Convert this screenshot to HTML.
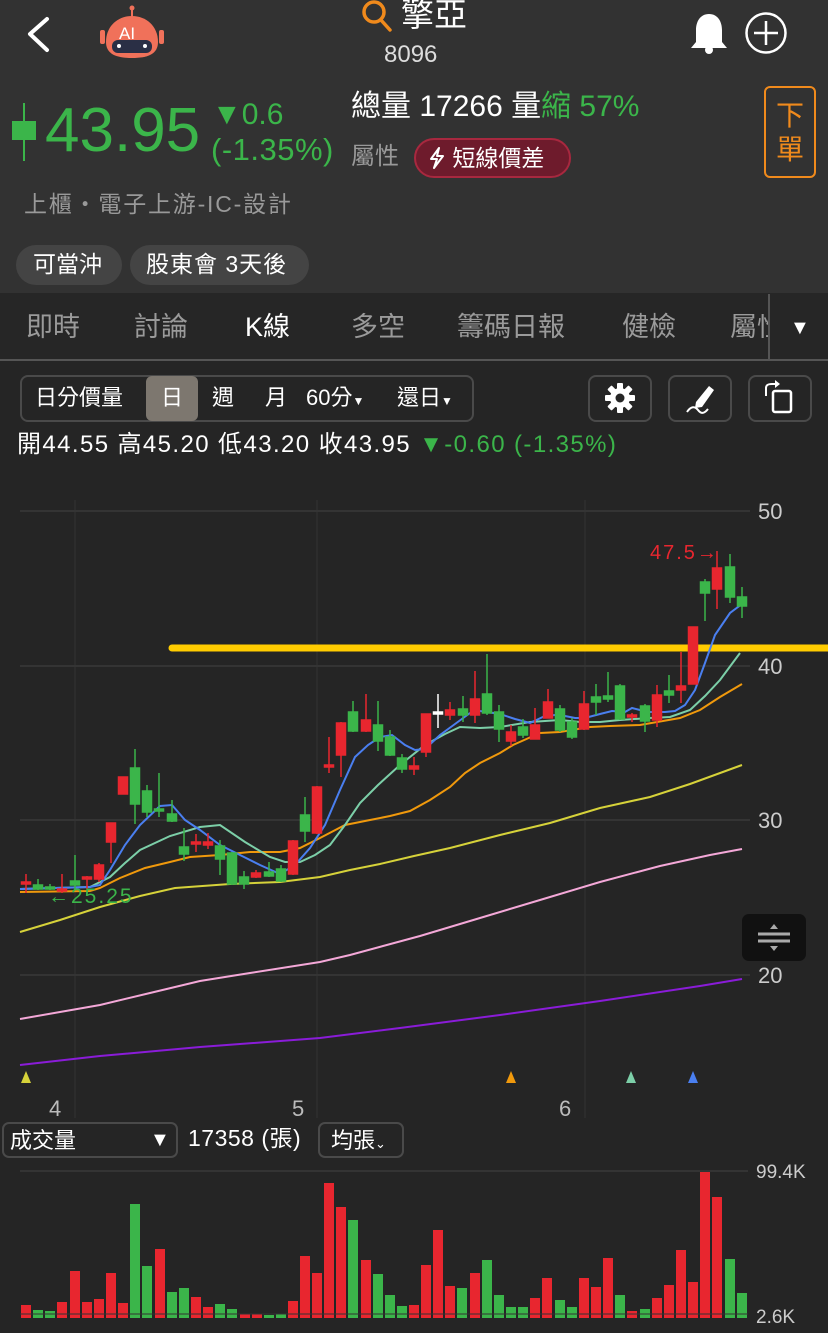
<!DOCTYPE html>
<html><head><meta charset="utf-8">
<style>
*{margin:0;padding:0;box-sizing:border-box}
body{width:828px;height:1333px;background:#252525;position:relative;overflow:hidden;font-family:"Liberation Sans","Noto Sans CJK TC",sans-serif;color:#fff}
.a{position:absolute;white-space:nowrap;line-height:1}
.g{color:#3bb54a}
</style></head><body>
<div class="a" style="left:0;top:0;width:828px;height:293px;background:#323232"></div>
<div class="a" style="left:0;top:293px;width:828px;height:67px;background:#262626"></div>
<div class="a" style="left:0;top:359px;width:828px;height:2px;background:#555"></div>
<div class="a" style="left:768px;top:294px;width:2px;height:65px;background:#555"></div>

<!-- header icons -->
<svg class="a" style="left:0;top:0" width="828" height="70">
 <path d="M47 19 L30 34 L47 50" stroke="#fff" stroke-width="4" fill="none" stroke-linecap="round" stroke-linejoin="round"/>
 <line x1="132" y1="8" x2="132" y2="18" stroke="#f0715a" stroke-width="2"/>
 <circle cx="132" cy="8" r="2.5" fill="#f0715a"/>
 <rect x="100" y="30" width="5" height="14" rx="2" fill="#f0715a"/>
 <rect x="159" y="30" width="5" height="14" rx="2" fill="#f0715a"/>
 <path d="M132 16 C118 16 106 26 106 42 C106 54 116 58 132 58 C148 58 158 54 158 42 C158 26 146 16 132 16Z" fill="#f0715a"/>
 <rect x="112" y="40" width="40" height="13" rx="6" fill="#2a2f45"/>
 <circle cx="119" cy="46" r="2" fill="#fff"/><circle cx="145" cy="46" r="2" fill="#fff"/>
 <text x="119" y="39" font-size="17" fill="#fff" font-family="Liberation Sans">AI</text>
 <circle cx="374" cy="12" r="10" stroke="#f08a1c" stroke-width="3.5" fill="none"/>
 <line x1="381" y1="20" x2="390" y2="30" stroke="#f08a1c" stroke-width="3.5" stroke-linecap="round"/>
 <path d="M709 14 C700 14 696 22 696 30 L696 42 L691 48 L727 48 L722 42 L722 30 C722 22 718 14 709 14Z" fill="#fff"/>
 <circle cx="709" cy="50" r="4" fill="#fff"/>
 <circle cx="766" cy="33" r="19.5" stroke="#fff" stroke-width="2.5" fill="none"/>
 <path d="M754 33 H778 M766 21 V45" stroke="#fff" stroke-width="2.5"/>
</svg>
<div class="a" style="left:401px;top:-2px;font-size:33px">擎亞</div>
<div class="a" style="left:384px;top:43px;font-size:24px;color:#ddd">8096</div>

<!-- price -->
<div class="a" style="left:23px;top:103px;width:2px;height:58px;background:#3bb54a"></div>
<div class="a" style="left:12px;top:121px;width:24px;height:19px;background:#3bb54a"></div>
<div class="a g" style="left:45px;top:100px;font-size:62px">43.95</div>
<div class="a g" style="left:212px;top:100px;font-size:30px">▼0.6</div>
<div class="a g" style="left:211px;top:134px;font-size:31px;letter-spacing:0.5px">(-1.35%)</div>
<div class="a" style="left:351px;top:92px;font-size:30px">總量 17266 量<span class="g">縮 57%</span></div>
<div class="a" style="left:351px;top:145px;font-size:24px;color:#999">屬性</div>
<div class="a" style="left:414px;top:138px;width:157px;height:40px;border-radius:20px;background:#6e1b2c;border:2px solid #a8283f;font-size:23px;padding:7px 0 0 12px">
<svg width="18" height="22" style="vertical-align:-3px" viewBox="0 0 18 22"><path d="M11 1 L3 12 H9 L6 21 L15 9 H9 Z" stroke="#fff" stroke-width="2" fill="none" stroke-linejoin="round"/></svg> 短線價差</div>
<div class="a" style="left:764px;top:86px;width:52px;height:92px;border:2px solid #f08a1c;border-radius:6px;color:#f08a1c;font-size:28px;line-height:34px;text-align:center;padding-top:11px">下<br>單</div>
<div class="a" style="left:24px;top:193px;font-size:23px;color:#999;letter-spacing:1.8px">上櫃・電子上游-IC-設計</div>
<div class="a" style="left:16px;top:245px;width:106px;height:40px;border-radius:20px;background:#444;font-size:23px;padding:8px 0 0 17px">可當沖</div>
<div class="a" style="left:130px;top:245px;width:179px;height:40px;border-radius:20px;background:#444;font-size:23px;padding:8px 0 0 16px;letter-spacing:1px">股東會 3天後</div>

<!-- tabs -->
<div class="a" style="top:314px;left:26px;font-size:27px;color:#9a9a9a">即時</div>
<div class="a" style="top:314px;left:134px;font-size:27px;color:#9a9a9a">討論</div>
<div class="a" style="top:314px;left:245px;font-size:27px;color:#fff">K線</div>
<div class="a" style="top:314px;left:351px;font-size:27px;color:#9a9a9a">多空</div>
<div class="a" style="top:314px;left:457px;font-size:27px;color:#9a9a9a">籌碼日報</div>
<div class="a" style="top:314px;left:622px;font-size:27px;color:#9a9a9a">健檢</div>
<div class="a" style="top:314px;left:730px;width:38px;overflow:hidden;font-size:27px;color:#9a9a9a">屬性</div>
<div class="a" style="top:318px;left:790px;font-size:20px;color:#fff">▼</div>

<!-- toolbar -->
<div class="a" style="left:20px;top:375px;width:454px;height:47px;border:2px solid #4a4a4a;border-radius:8px"></div>
<div class="a" style="left:146px;top:376px;width:52px;height:45px;background:#7d776f;border-radius:6px"></div>
<div class="a" style="top:387px;left:35px;font-size:22px">日分價量</div>
<div class="a" style="top:387px;left:161px;font-size:22px">日</div>
<div class="a" style="top:387px;left:212px;font-size:22px">週</div>
<div class="a" style="top:387px;left:265px;font-size:22px">月</div>
<div class="a" style="top:387px;left:306px;font-size:22px">60分<span style="font-size:12px">▼</span></div>
<div class="a" style="top:387px;left:397px;font-size:22px">還日<span style="font-size:12px">▼</span></div>
<div class="a" style="left:588px;top:375px;width:64px;height:47px;border:2px solid #4a4a4a;border-radius:8px"></div>
<div class="a" style="left:668px;top:375px;width:64px;height:47px;border:2px solid #4a4a4a;border-radius:8px"></div>
<div class="a" style="left:748px;top:375px;width:64px;height:47px;border:2px solid #4a4a4a;border-radius:8px"></div>
<svg class="a" style="left:580px;top:370px" width="240" height="56">
 <g transform="translate(40,28)" fill="#fff">
  <circle r="10"/>
  <g><rect x="-3" y="-15" width="6" height="30" rx="1"/><rect x="-3" y="-15" width="6" height="30" rx="1" transform="rotate(45)"/><rect x="-3" y="-15" width="6" height="30" rx="1" transform="rotate(90)"/><rect x="-3" y="-15" width="6" height="30" rx="1" transform="rotate(135)"/></g>
  <circle r="4.5" fill="#252525"/>
 </g>
 <path d="M129 16 L134 20 L122 37 L115 38 L116 32 Z" fill="#fff"/>
 <path d="M107 42 C111 36 115 36 118 40 C121 44 124 44 128 39" stroke="#fff" stroke-width="2" fill="none"/>
 <rect x="193" y="21" width="18" height="21" rx="2" stroke="#fff" stroke-width="2.5" fill="none"/>
 <path d="M186 26 V18 C186 15 188 14 192 14 H197" stroke="#fff" stroke-width="2" fill="none"/>
 <path d="M195 10 L200 14 L195 18 Z" fill="#fff"/>
</svg>
<div class="a" style="top:433px;left:17px;font-size:24px;letter-spacing:1.4px">開44.55 高45.20 低43.20 收43.95 <span class="g">▼-0.60 (-1.35%)</span></div>

<!-- chart -->
<svg class="a" style="left:0;top:0" width="828" height="1333">
 <g stroke="#3a3a3a" stroke-width="1.5">
  <line x1="20" y1="511" x2="750" y2="511"/><line x1="20" y1="666" x2="750" y2="666"/>
  <line x1="20" y1="820" x2="750" y2="820"/><line x1="20" y1="975" x2="750" y2="975"/>
 </g>
 <g stroke="#333" stroke-width="1">
  <line x1="75" y1="500" x2="75" y2="1118"/><line x1="317" y1="500" x2="317" y2="1118"/><line x1="585" y1="500" x2="585" y2="1118"/>
 </g>
 <g font-size="22" fill="#ccc" font-family="Liberation Sans">
  <text x="758" y="519">50</text><text x="758" y="674">40</text><text x="758" y="828">30</text><text x="758" y="983">20</text>
 </g>
 <line x1="172" y1="648" x2="828" y2="648" stroke="#ffcc00" stroke-width="7" stroke-linecap="round"/>
 <g fill="none" stroke-width="2">
  <polyline stroke="#8a1cd8" points="20,1065 100,1056 200,1047 320,1038 400,1028 500,1015 600,1001 700,986 742,979"/>
  <polyline stroke="#f4a8d8" points="20,1019 100,1005 150,993 200,981 250,973 320,962 350,955 420,936 480,918 540,900 600,882 660,866 710,855 742,849"/>
  <polyline stroke="#d6d23a" points="20,932 60,920 100,907 140,896 175,888 230,884 280,882 320,877 350,870 380,864 414,856 450,848 500,835 550,823 600,808 650,797 690,784 742,765"/>
  <polyline stroke="#f0990c" points="20,892 90,891 100,888 120,878 145,868 170,862 190,857 220,855 250,852 280,852 300,848 320,838 345,825 370,820 390,816 410,811 430,800 450,787 465,773 480,763 500,753 513,745 540,733 560,732 590,727 610,726 640,725 680,718 700,710 720,697 742,684"/>
  <polyline stroke="#7ccfa8" points="20,889 90,887 110,877 125,863 140,850 170,836 200,827 220,825 245,842 270,857 285,862 300,862 315,855 330,845 345,825 360,803 378,785 400,765 425,745 445,734 460,727 480,728 500,727 530,722 560,720 580,722 600,722 620,720 650,718 670,717 690,710 705,696 720,680 740,653"/>
  <polyline stroke="#4a7ff0" points="20,889 90,887 100,885 110,870 125,845 140,825 160,806 172,805 185,820 200,830 220,845 240,855 260,865 280,874 295,865 310,848 325,825 340,790 355,757 368,745 380,737 392,735 405,745 415,750 425,749 440,735 455,724 470,713 480,711 500,714 515,719 530,723 545,716 555,715 565,716 575,718 585,718 600,714 612,711 625,712 632,708 640,710 650,712 665,712 675,711 685,705 695,690 705,663 715,635 730,613 742,604"/>
 </g>
 <g stroke-width="1.5">
<g stroke="#e8262f" fill="#e8262f">
 <line x1="26" y1="874" x2="26" y2="893"/><rect x="21.5" y="882" width="9" height="2"/>
 <line x1="62" y1="874" x2="62" y2="893"/><rect x="57.5" y="889" width="9" height="2"/>
 <line x1="87" y1="876" x2="87" y2="889"/><rect x="82.5" y="877" width="9" height="2"/>
 <line x1="99" y1="863" x2="99" y2="882"/><rect x="94.5" y="865" width="9" height="14"/>
 <line x1="111" y1="823" x2="111" y2="863"/><rect x="106.5" y="823" width="9" height="19"/>
 <rect x="118.5" y="777" width="9" height="17"/>
 <line x1="196" y1="834" x2="196" y2="852"/><rect x="191.5" y="842" width="9" height="2"/>
 <line x1="208" y1="833" x2="208" y2="849"/><rect x="203.5" y="842" width="9" height="3"/>
 <line x1="256" y1="870" x2="256" y2="878"/><rect x="251.5" y="873" width="9" height="4"/>
 <line x1="293" y1="840" x2="293" y2="875"/><rect x="288.5" y="841" width="9" height="33"/>
 <line x1="317" y1="786" x2="317" y2="834"/><rect x="312.5" y="787" width="9" height="46"/>
 <line x1="329" y1="737" x2="329" y2="773"/><rect x="324.5" y="765" width="9" height="2"/>
 <line x1="341" y1="722" x2="341" y2="777"/><rect x="336.5" y="723" width="9" height="32"/>
 <line x1="366" y1="694" x2="366" y2="732"/><rect x="361.5" y="720" width="9" height="11"/>
 <line x1="414" y1="757" x2="414" y2="775"/><rect x="409.5" y="766" width="9" height="3"/>
 <line x1="426" y1="714" x2="426" y2="757"/><rect x="421.5" y="714" width="9" height="38"/>
 <line x1="450" y1="702" x2="450" y2="720"/><rect x="445.5" y="710" width="9" height="5"/>
 <line x1="475" y1="671" x2="475" y2="723"/><rect x="470.5" y="699" width="9" height="16"/>
 <line x1="511" y1="725" x2="511" y2="746"/><rect x="506.5" y="732" width="9" height="9"/>
 <line x1="535" y1="708" x2="535" y2="739"/><rect x="530.5" y="725" width="9" height="14"/>
 <line x1="548" y1="689" x2="548" y2="718"/><rect x="543.5" y="702" width="9" height="16"/>
 <line x1="584" y1="691" x2="584" y2="730"/><rect x="579.5" y="704" width="9" height="25"/>
 <line x1="632" y1="713" x2="632" y2="722"/><rect x="627.5" y="715" width="9" height="2"/>
 <line x1="657" y1="685" x2="657" y2="727"/><rect x="652.5" y="695" width="9" height="25"/>
 <line x1="681" y1="652" x2="681" y2="703"/><rect x="676.5" y="686" width="9" height="4"/>
 <rect x="688.5" y="627" width="9" height="57"/>
 <line x1="717" y1="551" x2="717" y2="609"/><rect x="712.5" y="568" width="9" height="21"/>
</g>
<g stroke="#3bb54a" fill="#3bb54a">
 <line x1="38" y1="879" x2="38" y2="890"/><rect x="33.5" y="885" width="9" height="4"/>
 <line x1="50" y1="884" x2="50" y2="890"/><rect x="45.5" y="887" width="9" height="2"/>
 <line x1="75" y1="855" x2="75" y2="890"/><rect x="70.5" y="881" width="9" height="4"/>
 <line x1="135" y1="749" x2="135" y2="824"/><rect x="130.5" y="768" width="9" height="36"/>
 <line x1="147" y1="785" x2="147" y2="817"/><rect x="142.5" y="791" width="9" height="21"/>
 <line x1="159" y1="773" x2="159" y2="817"/><rect x="154.5" y="809" width="9" height="2"/>
 <line x1="172" y1="800" x2="172" y2="822"/><rect x="167.5" y="814" width="9" height="7"/>
 <line x1="184" y1="828" x2="184" y2="861"/><rect x="179.5" y="847" width="9" height="7"/>
 <line x1="220" y1="840" x2="220" y2="875"/><rect x="215.5" y="846" width="9" height="13"/>
 <line x1="232" y1="852" x2="232" y2="885"/><rect x="227.5" y="853" width="9" height="31"/>
 <line x1="244" y1="871" x2="244" y2="889"/><rect x="239.5" y="877" width="9" height="7"/>
 <line x1="269" y1="862" x2="269" y2="877"/><rect x="264.5" y="872" width="9" height="4"/>
 <line x1="281" y1="865" x2="281" y2="882"/><rect x="276.5" y="869" width="9" height="12"/>
 <line x1="305" y1="797" x2="305" y2="842"/><rect x="300.5" y="815" width="9" height="16"/>
 <line x1="353" y1="701" x2="353" y2="732"/><rect x="348.5" y="712" width="9" height="19"/>
 <line x1="378" y1="701" x2="378" y2="751"/><rect x="373.5" y="725" width="9" height="16"/>
 <line x1="390" y1="730" x2="390" y2="756"/><rect x="385.5" y="737" width="9" height="18"/>
 <line x1="402" y1="754" x2="402" y2="773"/><rect x="397.5" y="758" width="9" height="11"/>
 <line x1="463" y1="696" x2="463" y2="722"/><rect x="458.5" y="709" width="9" height="6"/>
 <line x1="487" y1="654" x2="487" y2="715"/><rect x="482.5" y="694" width="9" height="19"/>
 <line x1="499" y1="705" x2="499" y2="742"/><rect x="494.5" y="712" width="9" height="17"/>
 <line x1="523" y1="719" x2="523" y2="738"/><rect x="518.5" y="727" width="9" height="8"/>
 <line x1="560" y1="705" x2="560" y2="732"/><rect x="555.5" y="709" width="9" height="21"/>
 <line x1="572" y1="718" x2="572" y2="739"/><rect x="567.5" y="722" width="9" height="15"/>
 <line x1="596" y1="684" x2="596" y2="715"/><rect x="591.5" y="697" width="9" height="5"/>
 <line x1="608" y1="672" x2="608" y2="702"/><rect x="603.5" y="696" width="9" height="3"/>
 <line x1="620" y1="684" x2="620" y2="720"/><rect x="615.5" y="686" width="9" height="33"/>
 <line x1="645" y1="704" x2="645" y2="732"/><rect x="640.5" y="706" width="9" height="15"/>
 <line x1="669" y1="675" x2="669" y2="703"/><rect x="664.5" y="691" width="9" height="4"/>
 <line x1="705" y1="579" x2="705" y2="621"/><rect x="700.5" y="582" width="9" height="11"/>
 <line x1="730" y1="554" x2="730" y2="603"/><rect x="725.5" y="567" width="9" height="30"/>
 <line x1="742" y1="587" x2="742" y2="618"/><rect x="737.5" y="597" width="9" height="9"/>
</g>
<g stroke="#fff" fill="#fff"><line x1="438" y1="694" x2="438" y2="728"/><rect x="433.5" y="712" width="9" height="2"/></g>
 </g>
 <text x="650" y="559" font-size="20" fill="#e8262f" font-family="Liberation Sans" letter-spacing="2">47.5→</text>
 <text x="48" y="903" font-size="21" fill="#3bb54a" font-family="Liberation Sans" letter-spacing="2">←25.25</text>
 <rect x="742" y="914" width="64" height="47" rx="7" fill="#111"/>
 <path d="M758 934 H790 M758 941 H790" stroke="#aaa" stroke-width="3"/>
 <path d="M770 929 L774 924 L778 929 Z M770 946 L774 951 L778 946 Z" fill="#aaa"/>
 <path d="M21 1083 L26 1071 L31 1083 Z" fill="#d6d23a"/>
 <path d="M506 1083 L511 1071 L516 1083 Z" fill="#f0990c"/>
 <path d="M626 1083 L631 1071 L636 1083 Z" fill="#7ccfa8"/>
 <path d="M688 1083 L693 1071 L698 1083 Z" fill="#4a7ff0"/>
 <g font-size="22" fill="#bbb" font-family="Liberation Sans"><text x="49" y="1116">4</text><text x="292" y="1116">5</text><text x="559" y="1116">6</text></g>
 <line x1="20" y1="1171" x2="748" y2="1171" stroke="#3a3a3a" stroke-width="1.5"/>
 <g font-size="19" fill="#ccc" font-family="Liberation Sans"><text x="756" y="1178">99.4K</text><text x="756" y="1323">2.6K</text></g>
 <g fill="#e8262f">
  <rect x="21" y="1305" width="10" height="13"/><rect x="57" y="1302" width="10" height="16"/><rect x="70" y="1271" width="10" height="47"/><rect x="82" y="1302" width="10" height="16"/><rect x="94" y="1299" width="10" height="19"/><rect x="106" y="1273" width="10" height="45"/><rect x="118" y="1303" width="10" height="15"/>
  <rect x="155" y="1249" width="10" height="69"/><rect x="191" y="1297" width="10" height="21"/><rect x="203" y="1307" width="10" height="11"/><rect x="240" y="1314" width="10" height="4"/><rect x="252" y="1314" width="10" height="4"/>
  <rect x="288" y="1301" width="10" height="17"/><rect x="300" y="1256" width="10" height="62"/><rect x="312" y="1273" width="10" height="45"/><rect x="324" y="1183" width="10" height="135"/><rect x="336" y="1207" width="10" height="111"/>
  <rect x="361" y="1260" width="10" height="58"/><rect x="409" y="1305" width="10" height="13"/><rect x="421" y="1265" width="10" height="53"/><rect x="433" y="1230" width="10" height="88"/><rect x="445" y="1286" width="10" height="32"/><rect x="470" y="1273" width="10" height="45"/>
  <rect x="530" y="1298" width="10" height="20"/><rect x="542" y="1278" width="10" height="40"/><rect x="579" y="1278" width="10" height="40"/><rect x="591" y="1287" width="10" height="31"/><rect x="603" y="1258" width="10" height="60"/><rect x="627" y="1311" width="10" height="7"/>
  <rect x="652" y="1298" width="10" height="20"/><rect x="664" y="1285" width="10" height="33"/><rect x="676" y="1250" width="10" height="68"/><rect x="688" y="1282" width="10" height="36"/><rect x="700" y="1172" width="10" height="146"/><rect x="712" y="1197" width="10" height="121"/>
 </g>
 <g fill="#3bb54a">
  <rect x="33" y="1310" width="10" height="8"/><rect x="45" y="1311" width="10" height="7"/><rect x="130" y="1204" width="10" height="114"/><rect x="142" y="1266" width="10" height="52"/><rect x="167" y="1292" width="10" height="26"/><rect x="179" y="1288" width="10" height="30"/>
  <rect x="215" y="1304" width="10" height="14"/><rect x="227" y="1309" width="10" height="9"/><rect x="264" y="1315" width="10" height="3"/><rect x="276" y="1314" width="10" height="4"/>
  <rect x="348" y="1220" width="10" height="98"/><rect x="373" y="1274" width="10" height="44"/><rect x="385" y="1295" width="10" height="23"/><rect x="397" y="1306" width="10" height="12"/>
  <rect x="457" y="1288" width="10" height="30"/><rect x="482" y="1260" width="10" height="58"/><rect x="494" y="1295" width="10" height="23"/><rect x="506" y="1307" width="10" height="11"/><rect x="518" y="1307" width="10" height="11"/>
  <rect x="555" y="1300" width="10" height="18"/><rect x="567" y="1307" width="10" height="11"/><rect x="615" y="1295" width="10" height="23"/><rect x="640" y="1309" width="10" height="9"/><rect x="725" y="1259" width="10" height="59"/><rect x="737" y="1293" width="10" height="25"/>
 </g>
 <line x1="20" y1="1314" x2="748" y2="1314" stroke="#333" stroke-width="1"/>
</svg>

<div class="a" style="left:2px;top:1122px;width:176px;height:36px;border:2px solid #4a4a4a;border-radius:7px;font-size:22px;padding:6px 0 0 6px">成交量<span style="position:absolute;left:146px;top:6px;font-size:20px">▼</span></div>
<div class="a" style="left:188px;top:1127px;font-size:23px;letter-spacing:0.5px">17358 (張)</div>
<div class="a" style="left:318px;top:1122px;width:86px;height:36px;border:2px solid #4a4a4a;border-radius:7px;font-size:22px;padding:6px 0 0 11px">均張<span style="font-size:13px">⌄</span></div>
</body></html>
